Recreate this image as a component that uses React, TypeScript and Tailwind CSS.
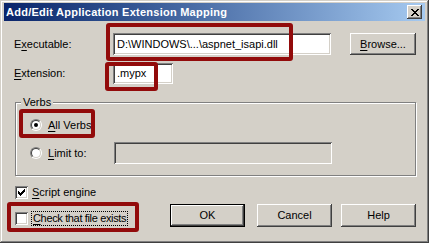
import React from 'react';

const raised =
    'bg-[#d4d0c8] shadow-[inset_-1px_-1px_0_#404040,inset_1px_1px_0_#ffffff,inset_-2px_-2px_0_#808080,inset_2px_2px_0_#d4d0c8]';
const sunken =
    'shadow-[inset_1px_1px_0_#808080,inset_-1px_-1px_0_#ffffff,inset_2px_2px_0_#404040,inset_-2px_-2px_0_#d4d0c8]';

const Key: React.FC<{ children: React.ReactNode }> = ({ children }) => (
    <span className="underline underline-offset-[2px] decoration-[1px]">{children}</span>
);

const Radio: React.FC<{ checked?: boolean }> = ({ checked }) => (
    <div className="w-[12px] h-[12px] rounded-full border border-t-[#808080] border-l-[#808080] border-b-white border-r-white flex-shrink-0">
        <div className="w-full h-full rounded-full border border-t-[#404040] border-l-[#404040] border-b-[#d4d0c8] border-r-[#d4d0c8] bg-white flex items-center justify-center">
            {checked && <div className="w-[4px] h-[4px] rounded-full bg-black" />}
        </div>
    </div>
);

const Checkbox: React.FC<{ checked?: boolean }> = ({ checked }) => (
    <div className={`w-[13px] h-[13px] bg-white flex-shrink-0 ${sunken}`}>
        {checked && (
            <svg width="13" height="13" viewBox="0 0 13 13" shapeRendering="crispEdges">
                <path d="M3 5h1v3h-1zM4 6h1v3h-1zM5 7h1v3h-1zM6 6h1v3h-1zM7 5h1v3h-1zM8 4h1v3h-1zM9 3h1v3h-1z" fill="#000" />
            </svg>
        )}
    </div>
);

const Button: React.FC<{ label: React.ReactNode; width: string; isDefault?: boolean; className?: string }> = ({
    label,
    width,
    isDefault,
    className = '',
}) => (
    <div className={`${width} h-[23px] ${isDefault ? 'border border-black' : ''} ${className}`}>
        <div className={`w-full h-full flex items-center justify-center ${raised}`}>{label}</div>
    </div>
);

const Highlight: React.FC<{ className: string }> = ({ className }) => (
    <div className={`absolute border-[4px] border-[#920b0b] rounded-[3px] pointer-events-none ${className}`} />
);

export default function App() {
    return (
        <div className="relative w-[429px] h-[243px] bg-[#d4d0c8] pt-[3px] px-[4px] text-[11px] text-black font-['Liberation_Sans',Arial,sans-serif] shadow-[inset_-1px_-1px_0_#404040,inset_1px_1px_0_#d4d0c8,inset_-2px_-2px_0_#808080,inset_2px_2px_0_#ffffff] overflow-hidden">
            {/* title bar */}
            <div className="h-[18px] flex items-center bg-gradient-to-r from-[#0a246a] to-[#a6caf0] pl-[2px] pr-[3px]">
                <span className="text-white font-bold text-[11px] tracking-[0.25px] leading-none">
                    Add/Edit Application Extension Mapping
                </span>
                <div className={`ml-auto w-[15px] h-[14px] flex items-center justify-center ${raised}`}>
                    <svg width="8" height="7" viewBox="0 0 8 7" shapeRendering="crispEdges">
                        <path
                            d="M0 0h2v1h-2zM6 0h2v1h-2zM1 1h2v1h-2zM5 1h2v1h-2zM2 2h4v1h-4zM3 3h2v1h-2zM2 4h4v1h-4zM1 5h2v1h-2zM5 5h2v1h-2zM0 6h2v1h-2zM6 6h2v1h-2z"
                            fill="#000"
                        />
                    </svg>
                </div>
            </div>

            {/* body */}
            <div className="pl-[10px] pr-[9px] pt-[12px]">
                <div className="flex items-center h-[22px]">
                    <span className="w-[99px]">
                        E<Key>x</Key>ecutable:
                    </span>
                    <div className={`w-[218px] h-[22px] bg-white flex items-center pl-[4px] ${sunken}`}>
                        D:\WINDOWS\...\aspnet_isapi.dll
                    </div>
                    <div className={`ml-[19px] w-[66px] h-[22px] flex items-center justify-center ${raised}`}>
                        <span>
                            <Key>B</Key>rowse...
                        </span>
                    </div>
                </div>

                <div className="flex items-center h-[21px] mt-[8px]">
                    <span className="w-[99px]">
                        <Key>E</Key>xtension:
                    </span>
                    <div className={`w-[60px] h-[21px] bg-white flex items-center pl-[4px] ${sunken}`}>.mypx</div>
                </div>

                <div className="relative mt-[18px] ml-[1px] w-[401px] h-[74px] border border-[#808080] shadow-[1px_1px_0_#ffffff,inset_1px_1px_0_#ffffff]">
                    <span className="absolute -top-[8px] left-[5px] px-[2px] bg-[#d4d0c8] leading-[14px]">Verbs</span>
                    <div className="pt-[11px] pl-[14px]">
                        <div className="flex items-center h-[22px]">
                            <Radio checked />
                            <span className="ml-[6px]">
                                <Key>A</Key>ll Verbs
                            </span>
                        </div>
                        <div className="flex items-center h-[22px] mt-[6px]">
                            <div className="w-[84px] flex items-center">
                                <Radio />
                                <span className="ml-[6px]">
                                    <Key>L</Key>imit to:
                                </span>
                            </div>
                            <div className={`w-[218px] h-[22px] bg-[#d4d0c8] ${sunken}`} />
                        </div>
                    </div>
                </div>

                <div className="flex items-center h-[16px] mt-[8px] ml-[1px]">
                    <Checkbox checked />
                    <span className="ml-[4px]">
                        <Key>S</Key>cript engine
                    </span>
                </div>

                <div className="flex mt-[4px]">
                    <div className="flex items-center h-[16px] mt-[6px] ml-[1px]">
                        <Checkbox />
                        <span className="ml-[3px] px-[1px] border border-dotted border-black leading-[13px] tracking-[-0.35px]">
                            <Key>C</Key>heck that file exists
                        </span>
                    </div>
                    <div className="ml-auto flex">
                        <Button label="OK" width="w-[75px]" isDefault />
                        <Button label="Cancel" width="w-[75px]" className="ml-[12px]" />
                        <Button label="Help" width="w-[75px]" className="ml-[9px]" />
                    </div>
                </div>
            </div>

            {/* annotation boxes */}
            <Highlight className="left-[106px] top-[23px] w-[187px] h-[38px]" />
            <Highlight className="left-[105px] top-[62px] w-[53px] h-[29px]" />
            <Highlight className="left-[19px] top-[109px] w-[76px] h-[29px]" />
            <Highlight className="left-[7px] top-[202px] w-[132px] h-[30px]" />
        </div>
    );
}
